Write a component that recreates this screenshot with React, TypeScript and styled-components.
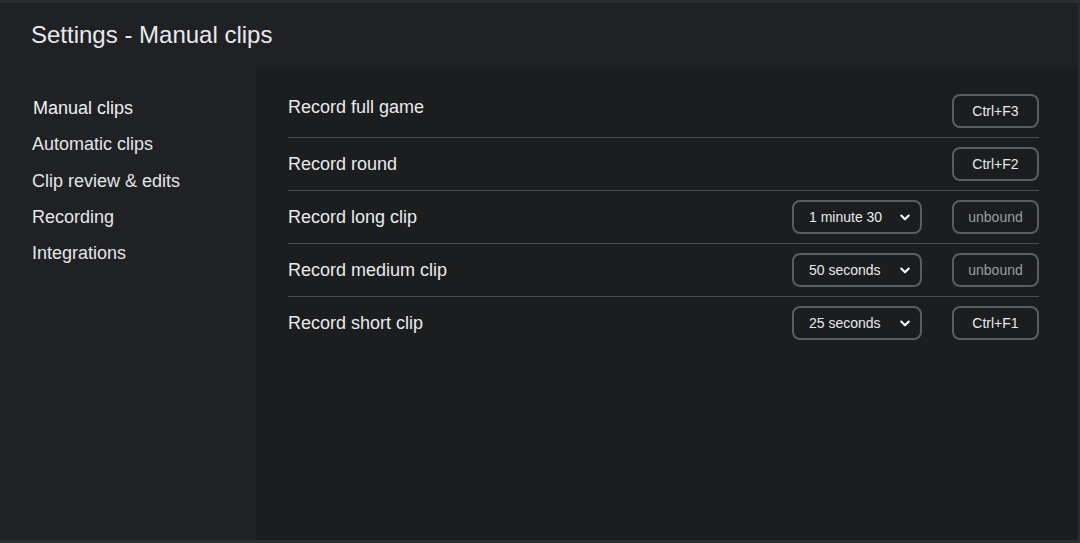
import React from "react";
import styled, { createGlobalStyle } from "styled-components";

const Global = createGlobalStyle`
  html, body { margin: 0; padding: 0; background: #202124; }
  body { font-family: "Liberation Sans", Arial, sans-serif; }
  * { box-sizing: border-box; }
`;

const Frame = styled.div`
  width: 1080px;
  height: 543px;
  border-top: 3px solid #2b2c2e;
  border-right: 2px solid #2b2c2e;
  border-bottom: 3px solid #2b2c2e;
  background: #202124;
  display: flex;
  flex-direction: column;
  color: #e8eaed;
`;

const Header = styled.header`
  height: 64px;
  flex: none;
  display: flex;
  align-items: center;
  padding-left: 31px;
`;

const Title = styled.h1`
  margin: 0;
  font-size: 24px;
  font-weight: 400;
  color: #e8eaed;
`;

const Body = styled.div`
  flex: 1;
  display: flex;
  min-height: 0;
`;

const Sidebar = styled.nav`
  width: 256px;
  flex: none;
  padding: 23px 0 0 32px;
  display: flex;
  flex-direction: column;
`;

const NavItem = styled.div<{ $active?: boolean }>`
  font-size: 18px;
  line-height: 36.3px;
  color: ${(p) => (p.$active ? "#eef0f2" : "#e3e5e8")};
  margin-left: ${(p) => (p.$active ? "1px" : "0")};
`;

const Content = styled.main`
  flex: 1;
  background: #1b1d1e;
  padding: 18px 39px 0 32px;
`;

const Row = styled.div<{ $last?: boolean }>`
  display: flex;
  align-items: center;
  height: 53px;
  border-bottom: ${(p) => (p.$last ? "none" : "1px solid #4b4d50")};
  padding-bottom: ${(p) => (p.$last ? "1px" : "0")};
`;

const Label = styled.div<{ $raised?: boolean }>`
  flex: 1;
  font-size: 18px;
  color: #e8eaed;
  position: relative;
  top: ${(p) => (p.$raised ? "-4px" : "0")};
`;

const Select = styled.div`
  width: 130px;
  height: 34px;
  border: 2px solid #5a5d61;
  border-radius: 8px;
  display: flex;
  align-items: center;
  justify-content: space-between;
  padding: 0 6px 0 15px;
  font-size: 14px;
  color: #e8eaed;
  margin-right: 30px;
`;

const KeyButton = styled.div<{ $muted?: boolean }>`
  width: 87px;
  height: 34px;
  border: 2px solid #5a5d61;
  border-radius: 8px;
  display: flex;
  align-items: center;
  justify-content: center;
  font-size: 14px;
  color: ${(p) => (p.$muted ? "#9a9ea3" : "#e8eaed")};
`;

const Chevron = () => (
  <svg width="18" height="18" viewBox="0 0 24 24" fill="none" stroke="#ffffff" strokeWidth="2.8" strokeLinecap="round" strokeLinejoin="round">
    <path d="M7 10l5 5 5-5" />
  </svg>
);

type RowData = { label: string; duration?: string; key: string };

const rows: RowData[] = [
  { label: "Record full game", key: "Ctrl+F3" },
  { label: "Record round", key: "Ctrl+F2" },
  { label: "Record long clip", duration: "1 minute 30", key: "unbound" },
  { label: "Record medium clip", duration: "50 seconds", key: "unbound" },
  { label: "Record short clip", duration: "25 seconds", key: "Ctrl+F1" },
];

const nav = ["Manual clips", "Automatic clips", "Clip review & edits", "Recording", "Integrations"];

export default function App() {
  return (
    <>
      <Global />
      <Frame>
        <Header>
          <Title>Settings - Manual clips</Title>
        </Header>
        <Body>
          <Sidebar>
            {nav.map((n, i) => (
              <NavItem key={n} $active={i === 0}>
                {n}
              </NavItem>
            ))}
          </Sidebar>
          <Content>
            {rows.map((r, i) => (
              <Row key={r.label} $last={i === rows.length - 1}>
                <Label $raised={i === 0}>{r.label}</Label>
                {r.duration && (
                  <Select>
                    <span>{r.duration}</span>
                    <Chevron />
                  </Select>
                )}
                <KeyButton $muted={r.key === "unbound"}>{r.key}</KeyButton>
              </Row>
            ))}
          </Content>
        </Body>
      </Frame>
    </>
  );
}
